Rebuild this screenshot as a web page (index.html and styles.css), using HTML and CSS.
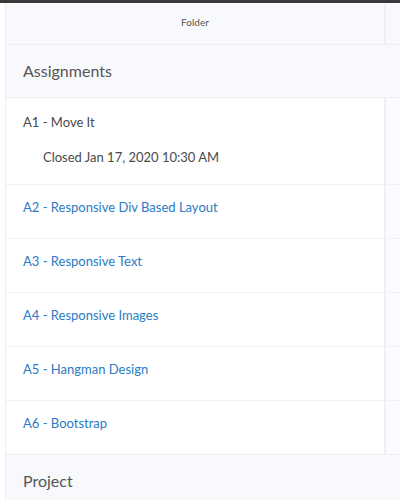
FILE: index.html
```html
<!DOCTYPE html>
<html>
<head>
<meta charset="utf-8">
<link rel="stylesheet" href="styles.css">
</head>
<body>
<div class="topbar"></div>
<div class="table">
  <div class="row head">
    <div class="cell main center">Folder</div>
    <div class="cell side"></div>
  </div>
  <div class="group">Assignments</div>
  <div class="row item tall">
    <div class="cell main">
      <div class="title">A1 - Move It</div>
      <div class="sub">Closed Jan 17, 2020 10:30 AM</div>
    </div>
    <div class="cell side"></div>
  </div>
  <div class="row item"><div class="cell main"><a class="link">A2 - Responsive Div Based Layout</a></div><div class="cell side"></div></div>
  <div class="row item"><div class="cell main"><a class="link">A3 - Responsive Text</a></div><div class="cell side"></div></div>
  <div class="row item"><div class="cell main"><a class="link">A4 - Responsive Images</a></div><div class="cell side"></div></div>
  <div class="row item"><div class="cell main"><a class="link">A5 - Hangman Design</a></div><div class="cell side"></div></div>
  <div class="row item"><div class="cell main"><a class="link">A6 - Bootstrap</a></div><div class="cell side"></div></div>
  <div class="group">Project</div>
</div>
</body>
</html>
```
FILE: styles.css
```css
html, body {
  margin: 0;
  padding: 0;
  background: #ffffff;
  font-family: Lato, "Open Sans", sans-serif;
  color: #4a4a4a;
}
.topbar {
  height: 3px;
  background: #3a3a3a;
}
.table {
  margin-left: 5px;
  border-left: 1px solid #eceef4;
}
.row {
  display: flex;
  border-bottom: 1px solid #eef0f5;
}
.cell.main {
  flex: 1;
  padding: 0 17px;
  display: flex;
  flex-direction: column;
}
.cell.side {
  width: 14px;
  border-left: 2px solid #eef0f6;
  background: #fafbfd;
}
.head {
  height: 41px;
  background: #f8f9fd;
}
.head .center {
  align-items: center;
  justify-content: center;
  padding-bottom: 3px;
  font-size: 10px;
  color: #555;
}
.head .side {
  background: #f8f9fd;
}
.group {
  height: 53px;
  box-sizing: border-box;
  background: #f8f9fd;
  border-bottom: 1px solid #eef0f5;
  display: flex;
  align-items: center;
  padding-left: 17px;
  padding-bottom: 1px;
  font-size: 16px;
  color: #555;
}
.item {
  height: 53px;
}
.item .main {
  padding-top: 14px;
  box-sizing: border-box;
}
.item.tall {
  height: 86px;
}
.title {
  font-size: 13px;
  line-height: 16px;
  color: #4a4a4a;
  margin-top: 2px;
}
.sub {
  font-size: 13px;
  line-height: 16px;
  color: #4a4a4a;
  margin-left: 20px;
  margin-top: 19px;
}
.link {
  font-size: 13px;
  line-height: 16px;
  color: #2a7bc4;
}
```
